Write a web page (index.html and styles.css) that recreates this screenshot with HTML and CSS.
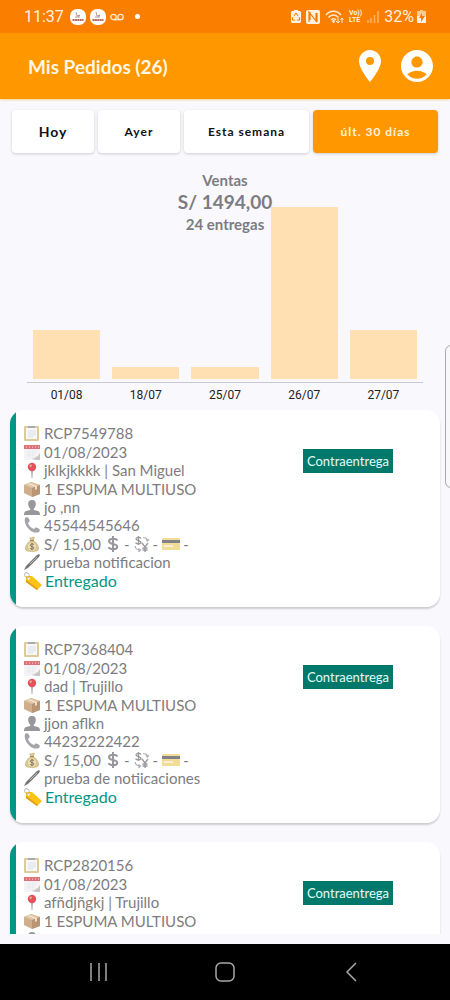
FILE: index.html
```html
<!DOCTYPE html>
<html lang="es">
<head>
    <meta charset="UTF-8">
    <meta name="viewport" content="width=device-width, initial-scale=1.0">
    <title>Mis Pedidos</title>
    <link rel="stylesheet" href="styles.css">
</head>
<body>
    <!-- Icons shared by the order cards -->
    <svg class="sprite" aria-hidden="true">
        <symbol id="clipboard" viewBox="0 0 16 16">
            <rect x="0" y="1" width="15" height="15" rx="1" fill="#dccb9c"/>
            <rect x="2" y="3" width="11" height="11" fill="#f8f8fa"/>
            <path d="M4 1h7v2H4z" fill="#aaa9ad"/>
            <path d="M4 6h8M4 8h8M4 10h8M4 12h5" stroke="#d3d5dc" stroke-width=".7"/>
        </symbol>
        <symbol id="calendar" viewBox="0 0 16 16">
            <path d="M0 1h16v12l-5 3H0z" fill="#f4f3f6"/>
            <path d="M0 1h16v4H0z" fill="#df7078"/>
            <path d="M2 3h1M5 3h1M8 3h1M11 3h1M14 3h1" stroke="#f7d7da"/>
            <path d="M2 8h10M2 11h8M5 6v8M9 6v7" stroke="#e5e4e9" stroke-width=".6"/>
            <path d="M16 9c-1 3-4 4-8 6l4 1h4z" fill="#c6c6ca"/>
        </symbol>
        <symbol id="pin" viewBox="0 0 16 16">
            <path d="M7 8h2l-.6 8h-.8z" fill="#aaa"/>
            <circle cx="8" cy="5" r="4.200" fill="#e5535a"/>
            <circle cx="6.700" cy="3.700" r="1.200" fill="#f2a0a3"/>
        </symbol>
        <symbol id="box" viewBox="0 0 16 16">
            <path d="M0 4l7-3 9 3v9l-8 3-8-4z" fill="#cfae8e"/>
            <path d="M0 4l7-3 9 3-8 3z" fill="#dfc4a5"/>
            <path d="M8 7l8-3v9l-8 3z" fill="#b99575"/>
            <path d="M3 3l8 3v3l2-1V5L5 2z" fill="#f0dfc6"/>
        </symbol>
        <symbol id="person" viewBox="0 0 16 16">
            <path d="M8 1c3 0 4 2 3.800 4.500C11.500 8 10.500 9 9.800 9.500V11l4.200 1c1.500.5 2 2 2 4H0c0-2 .5-3.500 2-4l4.200-1V9.500C5.500 9 4.500 8 4.200 5.500 4 3 5 1 8 1z" fill="#98979b"/>
        </symbol>
        <symbol id="phone" viewBox="0 0 16 16">
            <path d="M1 1l2-1c2 1 3 3 2.500 4.500L4 6c1 3 3 5 6 6l1.500-1.500C13 10 15 11.500 16 13l-1 2C9 18-1 9 1 1z" fill="#a5a4a8"/>
        </symbol>
        <symbol id="money-bag" viewBox="0 0 16 16">
            <path d="M5 1l2 .5L9 .5l2 1-1.500 3C13 6 15 10 15 12.500 15 15 12 16 8 16s-7-1-7-3.500C1 10 3 6 6.500 4.500z" fill="#d8c491"/>
            <path d="M6 4.500h4" stroke="#9c8454"/>
            <circle cx="8" cy="10.500" r="4" fill="#eadfb9"/>
            <path d="M10 8.500C9 7.500 6.300 7.700 6.300 9.200c0 1.800 3.600.9 3.600 2.600 0 1.500-2.600 1.600-3.900.6M8 7v7" fill="none" stroke="#85765a"/>
        </symbol>
        <symbol id="dollar" viewBox="0 0 16 16">
            <path d="M12.500 4.500C11 2 4 2 4 5.200 4 9 12.300 7 12.300 10.800 12.300 14 5 14 3.500 11.300M8 0v16" fill="none" stroke="#98979b" stroke-width="2"/>
        </symbol>
        <symbol id="exchange" viewBox="0 0 16 16">
            <path d="M7 2.500C6 1 2 1 2 3s5 1.300 5 3.300S3 8.300 1.500 6.800M4.500 0v9M8 7l3 4 3-4M11 11v5M8.500 12h5M8.500 14h5" fill="none" stroke="#98979b" stroke-width="1.300"/>
            <path d="M9 1.500c3 0 4 1 4.500 3M12 3.500l1.500 1.500L15 3M1 10c.5 3 2 4 5 4.200M4.500 12.500L6.500 14l-2 2" fill="none" stroke="#aeadb1" stroke-width="1.200"/>
        </symbol>
        <symbol id="card" viewBox="0 0 18 16">
            <rect y="2" width="18" height="12" rx="1" fill="#f2dc98"/>
            <path d="M0 4l18 0v3H0z" fill="#838286"/>
            <path d="M2 9h9v2H2z" fill="#faf0cd"/>
        </symbol>
        <symbol id="pen" viewBox="0 0 16 16">
            <path d="M0 16l2-4L13 1l2-1 1 1-1 2L4 14z" fill="#77767a"/>
            <path d="M6 10l7-7" stroke="#bdbcc0"/>
        </symbol>
        <symbol id="tag" viewBox="0 0 18 18">
            <path d="M2 4l6 0 10 9-5 5L2 10z" fill="#fbc217"/>
            <path d="M2 10l11 8 1-1L2 8z" fill="#e09b13"/>
            <circle cx="4.500" cy="6.500" r="1.200" fill="#fff"/>
            <path d="M4 7C-1 4 0 0 3 .8 5 1 6 3 4.500 6" fill="none" stroke="#aaa" stroke-width=".9"/>
        </symbol>
    </svg>

    <div class="statusbar">
        <span class="clock">11:37</span>
        <svg class="app-icon" viewBox="0 0 16 16"><rect width="16" height="16" rx="7" fill="#fff"/><path d="M6 3l1 4 3-1-2 2M5 8h5" fill="none" stroke="#b79a94"/><path d="M2.500 11h11" stroke="#b9665a" stroke-width="2" stroke-dasharray="2 .4"/></svg>
        <svg class="app-icon" viewBox="0 0 16 16"><rect width="16" height="16" rx="7" fill="#fff"/><path d="M6 3l1 4 3-1-2 2M5 8h5" fill="none" stroke="#b79a94"/><path d="M2.500 11h11" stroke="#b9665a" stroke-width="2" stroke-dasharray="2 .4"/></svg>
        <svg class="voicemail" viewBox="0 0 14 8" fill="none" stroke="#ffe9cf" stroke-width="1.300"><circle cx="3.500" cy="4" r="2.700"/><circle cx="10.500" cy="4" r="2.700"/><path d="M3.500 6.700h7"/></svg>
        <span class="dot"></span>
        <div class="status-right">
            <svg width="10" height="14" viewBox="0 0 10 14"><path d="M3 0h4v1h2l1 1v10l-1 1H1l-1-1V2l1-1h2z" fill="#fff1df"/><path d="M3 6l2-3 2 3M8 7l1 3H6M4 10H1l1-3" fill="none" stroke="#f57c00"/></svg>
            <svg width="14" height="14" viewBox="0 0 14 14"><rect width="14" height="14" rx="2" fill="#fff1df"/><path d="M3 12V2l7 9V3M4 2v8M11 3v9" fill="none" stroke="#f57c00" stroke-width="1.200"/></svg>
            <svg width="19" height="14" viewBox="0 0 19 14" fill="none" stroke="#ffecd6" stroke-width="1.500"><path d="M1 5c4-5 11-5 15 0M3.500 7.500c3-3.500 7-3.500 10 0M6 10c1.500-1.700 3.500-1.700 5 0"/><circle cx="8.500" cy="11.500" r=".7"/><path d="M13 8v5M11 11l2 2 2-2M17 13V8M15.500 10L17 8l1.500 2" stroke-width="1"/></svg>
            <span class="volte"><span>Vo))</span><span>LTE</span></span>
            <svg width="12" height="13" viewBox="0 0 12 13"><path d="M1 13v-3M4 13V8M7.500 13V5M11 13V1" stroke="#ffb566" stroke-width="1.500"/></svg>
            <span class="battery">32%</span>
            <svg width="9" height="14" viewBox="0 0 9 14"><path d="M3 0h3v1h3v5H0V1h3z" fill="#ffc98f"/><path d="M0 6h9v7H0z" fill="#fff1df"/><path d="M5 3L2 8h2v4l4-6H5z" fill="#f57c00"/></svg>
        </div>
    </div>

    <header class="topbar">
        <h1>Mis Pedidos (26)</h1>
        <button class="icon-button" aria-label="Ubicación">
            <svg width="22" height="32" viewBox="0 0 22 32"><path d="M11 0C5 0 0 5 0 11c0 8 11 21 11 21s11-13 11-21C22 5 17 0 11 0zm0 15a4 4 0 1 1 0-8 4 4 0 0 1 0 8z" fill="#fff" fill-rule="evenodd"/></svg>
        </button>
        <button class="icon-button" aria-label="Perfil">
            <svg width="32" height="32" viewBox="2 2 20 20"><path d="M12 2C6.480 2 2 6.480 2 12s4.480 10 10 10 10-4.480 10-10S17.520 2 12 2zm0 4c1.930 0 3.500 1.570 3.500 3.500S13.930 13 12 13s-3.500-1.570-3.500-3.500S10.070 6 12 6zm0 14c-2.030 0-4.430-.82-6.140-2.880C7.550 15.800 9.680 15 12 15s4.450.8 6.140 2.120C16.430 19.180 14.030 20 12 20z" fill="#fff"/></svg>
        </button>
    </header>

    <nav class="filters">
        <button class="filter filter-first">Hoy</button>
        <button class="filter">Ayer</button>
        <button class="filter filter-wide">Esta semana</button>
        <button class="filter filter-wide active">últ. 30 días</button>
    </nav>

    <section class="chart">
        <div class="summary">
            <p>Ventas</p>
            <p class="amount">S/ 1494,00</p>
            <p>24 entregas</p>
        </div>
        <div class="bars">
            <div class="bar" style="height: 49px"></div>
            <div class="bar" style="height: 12px"></div>
            <div class="bar" style="height: 12px"></div>
            <div class="bar" style="height: 172px"></div>
            <div class="bar" style="height: 49px"></div>
        </div>
        <div class="days">
            <span>01/08</span>
            <span>18/07</span>
            <span>25/07</span>
            <span>26/07</span>
            <span>27/07</span>
        </div>
    </section>

    <main class="orders">
        <article class="order">
            <ul class="details">
                <li><svg><use href="#clipboard"/></svg>RCP7549788</li>
                <li><svg><use href="#calendar"/></svg>01/08/2023</li>
                <li><svg><use href="#pin"/></svg>jklkjkkkk | San Miguel</li>
                <li><svg><use href="#box"/></svg>1 ESPUMA MULTIUSO</li>
                <li><svg><use href="#person"/></svg>jo ,nn</li>
                <li><svg><use href="#phone"/></svg>45544545646</li>
                <li><svg><use href="#money-bag"/></svg>S/ 15,00 <span class="pay"><svg><use href="#dollar"/></svg>-</span><span class="pay"><svg><use href="#exchange"/></svg>-</span><span class="pay pay-card"><svg><use href="#card"/></svg>-</span></li>
                <li><svg><use href="#pen"/></svg>prueba notificacion</li>
                <li class="state"><svg><use href="#tag"/></svg>Entregado</li>
            </ul>
            <div class="method"><span>Contraentrega</span></div>
        </article>

        <article class="order">
            <ul class="details">
                <li><svg><use href="#clipboard"/></svg>RCP7368404</li>
                <li><svg><use href="#calendar"/></svg>01/08/2023</li>
                <li><svg><use href="#pin"/></svg>dad | Trujillo</li>
                <li><svg><use href="#box"/></svg>1 ESPUMA MULTIUSO</li>
                <li><svg><use href="#person"/></svg>jjon aflkn</li>
                <li><svg><use href="#phone"/></svg>44232222422</li>
                <li><svg><use href="#money-bag"/></svg>S/ 15,00 <span class="pay"><svg><use href="#dollar"/></svg>-</span><span class="pay"><svg><use href="#exchange"/></svg>-</span><span class="pay pay-card"><svg><use href="#card"/></svg>-</span></li>
                <li><svg><use href="#pen"/></svg>prueba de notiicaciones</li>
                <li class="state"><svg><use href="#tag"/></svg>Entregado</li>
            </ul>
            <div class="method"><span>Contraentrega</span></div>
        </article>

        <article class="order">
            <ul class="details">
                <li><svg><use href="#clipboard"/></svg>RCP2820156</li>
                <li><svg><use href="#calendar"/></svg>01/08/2023</li>
                <li><svg><use href="#pin"/></svg>afñdjñgkj | Trujillo</li>
                <li><svg><use href="#box"/></svg>1 ESPUMA MULTIUSO</li>
                <li><svg><use href="#person"/></svg>ajkfdjkg jdfkjdkfj</li>
            </ul>
            <div class="method"><span>Contraentrega</span></div>
        </article>
    </main>

    <footer class="navbar">
        <button aria-label="Recientes"><svg width="20" height="20" viewBox="0 0 20 20"><path d="M2 1v18M10 1v18M17 1v18" stroke="#a8a8a8" stroke-width="1.500"/></svg></button>
        <button aria-label="Inicio"><svg width="20" height="20" viewBox="0 0 20 20"><rect x="1" y="1" width="18" height="18" rx="5" fill="none" stroke="#a8a8a8" stroke-width="1.500"/></svg></button>
        <button aria-label="Atrás"><svg width="20" height="20" viewBox="0 0 20 20"><path d="M15 1l-9 9 9 9" fill="none" stroke="#a8a8a8" stroke-width="1.500"/></svg></button>
    </footer>

    <div class="edge-handle"></div>
</body>
</html>
```

FILE: styles.css
```css
body {
    font-family: Lato, sans-serif;
    margin: 0;
    background-color: #f8f8fd;
    color: #7d7c80;
    display: flex;
    flex-direction: column;
    height: 100vh;
    position: relative;
    overflow: hidden;
}

button {
    font-family: inherit;
    border: none;
    padding: 0;
    background: none;
    cursor: pointer;
}

svg {
    display: block;
    flex-shrink: 0;
}

.sprite {
    display: none;
}

/* Status bar */
.statusbar {
    display: flex;
    align-items: center;
    height: 33px;
    flex-shrink: 0;
    box-sizing: border-box;
    padding: 0 24px;
    background-color: #fa7f00;
    color: #fff1df;
    font-family: Roboto, sans-serif;
    font-size: 16px;
}

.clock {
    margin-right: 6px;
}

.app-icon {
    width: 16px;
    height: 16px;
    margin-right: 4px;
}

.voicemail {
    width: 14px;
    height: 8px;
}

.dot {
    width: 5px;
    height: 5px;
    border-radius: 50%;
    background-color: #fff;
    margin-left: 11px;
}

.status-right {
    display: flex;
    align-items: center;
    gap: 5px;
    margin-left: auto;
}

.volte {
    display: flex;
    flex-direction: column;
    font-size: 7px;
    line-height: 7px;
    font-weight: bold;
}

.battery {
    margin-right: -2px;
}

/* Header */
.topbar {
    display: flex;
    align-items: center;
    gap: 20px;
    height: 66px;
    flex-shrink: 0;
    box-sizing: border-box;
    padding: 0 17px 0 28px;
    background-color: #ff9800;
    box-shadow: 0 1px 2px rgba(255, 152, 0, 0.4);
}

.topbar h1 {
    margin: 0 auto 0 0;
    font-size: 19px;
    color: #fff6e5;
}

/* Date filters */
.filters {
    display: flex;
    gap: 4px;
    padding: 11px 12px 0;
}

.filter {
    flex: 82;
    height: 43px;
    border-radius: 4px;
    background-color: #fff;
    box-shadow: 0 1px 3px rgba(0, 0, 0, 0.18);
    color: #111;
    font-size: 12px;
    font-weight: bold;
    letter-spacing: 1px;
}

.filter-first {
    font-size: 14px;
}

.filter-wide {
    flex: 125;
}

.filter.active {
    background-color: #ff9800;
    color: #fff3dc;
}

/* Sales chart */
.chart {
    position: relative;
    padding: 54px 27px 0;
}

.summary {
    position: absolute;
    top: 17px;
    left: 0;
    right: 0;
    text-align: center;
    font-size: 15px;
    line-height: 20px;
    font-weight: bold;
}

.summary p {
    margin: 0;
}

.summary .amount {
    font-size: 19px;
    line-height: 24px;
}

.bars {
    display: grid;
    grid-template-columns: repeat(5, 1fr);
    align-items: end;
    padding-bottom: 3px;
    border-bottom: 1px solid #c9c8d2;
}

.bar {
    margin: 0 6px;
    background-color: #ffe0b2;
}

.days {
    display: grid;
    grid-template-columns: repeat(5, 1fr);
    padding: 4px 0 7px;
    font-family: Roboto, sans-serif;
    font-size: 12px;
    line-height: 16px;
    color: #222;
    text-align: center;
}

/* Orders */
.orders {
    display: flex;
    flex-direction: column;
    gap: 19px;
    flex: 1;
    min-height: 0;
    overflow: hidden;
    padding: 0 10px;
    margin-bottom: 10px;
}

.order {
    display: flex;
    flex-shrink: 0;
    padding: 14px 47px 17px 14px;
    border-radius: 14px;
    background: linear-gradient(to right, #009688 6px, #fff 6px);
    box-shadow: 0 2px 2px rgba(0, 0, 0, 0.18);
}

.details {
    display: grid;
    grid-template-rows: repeat(9, 1fr);
    min-height: 166px;
    flex: 1;
    margin: 0;
    padding: 0;
    list-style: none;
    font-size: 15px;
    line-height: 18px;
}

.details li {
    display: flex;
    align-items: center;
    gap: 4px;
}

.details svg {
    width: 16px;
    height: 16px;
}

.details .pay {
    display: flex;
    align-items: center;
    gap: 3px;
}

.details .pay-card svg {
    width: 18px;
}

.details .state {
    gap: 3px;
    color: #009688;
    font-size: 16px;
}

.details .state svg {
    width: 18px;
    height: 18px;
}

.method {
    padding-top: 25px;
}

.method span {
    display: block;
    padding: 0 4px;
    background-color: #00796b;
    color: #e4fbf7;
    font-size: 13px;
    line-height: 24px;
}

/* System navigation */
.navbar {
    display: flex;
    justify-content: center;
    gap: 106px;
    height: 56px;
    flex-shrink: 0;
    background-color: #000;
}

.edge-handle {
    position: absolute;
    top: 345px;
    right: -9px;
    width: 12px;
    height: 141px;
    border: 1px solid #a9a9ad;
    border-radius: 6px;
    background-color: #f8f8fb;
}
```
